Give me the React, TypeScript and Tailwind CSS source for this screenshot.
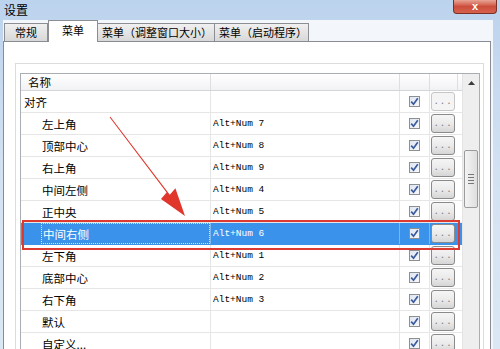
import React from "react";

type Row = { name: string; key: string; indent: boolean; selected?: boolean; dim?: boolean };

const rows: Row[] = [
  { name: "对齐", key: "", indent: false, dim: true },
  { name: "左上角", key: "Alt+Num 7", indent: true },
  { name: "顶部中心", key: "Alt+Num 8", indent: true },
  { name: "右上角", key: "Alt+Num 9", indent: true },
  { name: "中间左侧", key: "Alt+Num 4", indent: true },
  { name: "正中央", key: "Alt+Num 5", indent: true },
  { name: "中间右侧", key: "Alt+Num 6", indent: true, selected: true },
  { name: "左下角", key: "Alt+Num 1", indent: true },
  { name: "底部中心", key: "Alt+Num 2", indent: true },
  { name: "右下角", key: "Alt+Num 3", indent: true },
  { name: "默认", key: "", indent: true },
  { name: "自定义...", key: "", indent: true },
];

function CheckBox() {
  return (
    <div className="flex h-[11px] w-[11px] items-center justify-center border border-[#8e8f8f] bg-gradient-to-br from-[#dfe6f2] to-[#f6f8fb]">
      <svg width="9" height="9" viewBox="0 0 9 9">
        <path d="M1.2 4.6 L3.5 7.2 L7.8 1.2" fill="none" stroke="#3b5a9c" strokeWidth="1.7" />
      </svg>
    </div>
  );
}

function DotsButton({ dim }: { dim?: boolean }) {
  return (
    <div
      className={`flex h-[19px] w-[24px] items-end justify-center rounded-[3px] border pb-[3px] ${
        dim
          ? "border-[#c6c6c6] bg-[#f4f4f4]"
          : "border-[#8a8a8a] bg-gradient-to-b from-[#f5f5f5] via-[#ebebeb] to-[#d6d6d6]"
      }`}
    >
      <span className="font-['Liberation_Mono',monospace] text-[9px] leading-[9px] tracking-[1px] text-[#7a7a7a]">...</span>
    </div>
  );
}

export default function App() {
  const cjk = "font-['Noto_Sans_CJK_SC','Noto_Sans',sans-serif]";

  return (
    <div className={`relative h-[349px] w-[500px] overflow-hidden bg-gradient-to-b from-[#bcd3ed] via-[#d3e2f3] to-[#dbe7f4] ${cjk}`}>
      {/* title bar */}
      <div className="flex h-[20px] items-start justify-between">
        <span className="pl-[4px] pt-[3px] text-[12px] leading-[14px] text-black">设置</span>
        <div className="mr-[3px] flex h-[14px] w-[44px] items-center justify-center rounded-b-[4px] border border-t-0 border-[#7a3027] bg-gradient-to-b from-[#e7a495] via-[#cd4d3c] to-[#d5624d]">
          <span className="font-['Liberation_Sans',sans-serif] text-[11px] font-bold leading-[11px] text-white">x</span>
        </div>
      </div>

      {/* dialog body */}
      <div className="ml-[3px] flex h-[329px] w-[490px] flex-col bg-[#f3f6fa]">
        {/* tabs */}
        <div className="flex h-[23px] items-end pl-[1px] text-[11px] leading-[13px] text-black">
          <div className="flex h-[18px] w-[44px] items-center justify-center border border-b-0 border-[#8c8e94] bg-gradient-to-b from-[#f0f0f0] to-[#d8d8d8]">
            常规
          </div>
          <div className="relative z-10 -mb-px flex h-[22px] w-[50px] items-start justify-center border border-b-0 border-[#8c8e94] bg-white pt-[3px]">
            菜单
          </div>
          <div className="flex h-[18px] w-[117px] items-center border border-b-0 border-l-0 border-[#8c8e94] bg-gradient-to-b from-[#f0f0f0] to-[#d8d8d8] pl-[4px]">
            菜单（调整窗口大小）
          </div>
          <div className="flex h-[18px] w-[94px] items-center border border-b-0 border-l-0 border-[#8c8e94] bg-gradient-to-b from-[#f0f0f0] to-[#d8d8d8] pl-[4px]">
            菜单（启动程序）
          </div>
        </div>

        {/* tab panel */}
        <div className="w-[488px] flex-1 border border-[#898c95] bg-white pl-[11px] pt-[21px]">
          <div className="h-[300px] w-[469px] border border-[#dcdcdc] pl-[4px] pt-[9px]">
            <div className="flex h-[300px] w-[460px] border border-[#a9aeb5]">
              {/* table */}
              <div className="flex w-[441px] flex-col">
                <div className="flex h-[17px] shrink-0 border-b border-[#d5d5d5] bg-gradient-to-b from-white to-[#f1f2f4] text-[11.5px] leading-[16px]">
                  <div className="w-[190px] border-r border-[#dedede] pl-[7px]">名称</div>
                  <div className="w-[189px] border-r border-[#dedede]" />
                  <div className="w-[30px] border-r border-[#dedede]" />
                  <div className="w-[28px] border-r border-[#dedede]" />
                </div>
                {rows.map((r) => (
                  <div
                    key={r.name}
                    className={`flex h-[22px] shrink-0 border-b ${
                      r.selected ? "border-[#3a92ea] bg-[#3a92ea] text-white" : "border-[#e6e6e6] text-black"
                    }`}
                  >
                    <div
                      className={`flex w-[190px] items-center border-r text-[11.5px] leading-[14px] ${
                        r.selected ? "border-[#7fb6ee]" : "border-[#e6e6e6]"
                      } ${r.indent ? "pl-[20px]" : "pl-[2px]"}`}
                    >
                      {r.selected ? (
                        <div className="flex h-[21px] w-full items-center border border-dotted border-[#d6e8fb] pl-[1px]">
                          {r.name}
                        </div>
                      ) : (
                        <span className="pl-[1px]">{r.name}</span>
                      )}
                    </div>
                    <div
                      className={`flex w-[189px] items-center border-r pl-[2px] font-['Liberation_Mono',monospace] text-[9.5px] leading-[12px] ${
                        r.selected ? "border-[#7fb6ee]" : "border-[#e6e6e6]"
                      }`}
                    >
                      {r.key}
                    </div>
                    <div
                      className={`flex w-[30px] items-center justify-center border-r ${
                        r.selected ? "border-[#7fb6ee]" : "border-[#e6e6e6]"
                      }`}
                    >
                      <CheckBox />
                    </div>
                    <div className="flex w-[32px] items-center pl-[1px]">
                      <DotsButton dim={r.dim} />
                    </div>
                  </div>
                ))}
              </div>

              {/* scrollbar */}
              <div className="flex w-[17px] flex-col border-l border-[#e3e3e3] bg-[#eeeeee]">
                <div className="flex h-[17px] items-center justify-center">
                  <svg width="7" height="4" viewBox="0 0 7 4">
                    <path d="M0 4 L3.5 0 L7 4 Z" fill="#3c3c3c" />
                  </svg>
                </div>
                <div className="mx-[1px] mt-[59px] flex h-[58px] flex-col items-center justify-center gap-[2px] rounded-[2px] border border-[#9b9b9b] bg-gradient-to-r from-[#f4f4f4] to-[#dedede]">
                  <div className="h-px w-[6px] bg-[#777]" />
                  <div className="h-px w-[6px] bg-[#777]" />
                  <div className="h-px w-[6px] bg-[#777]" />
                  <div className="h-px w-[6px] bg-[#777]" />
                </div>
              </div>
            </div>
          </div>
        </div>
      </div>

      {/* annotation: red highlight box */}
      <div className="pointer-events-none absolute left-[22px] top-[220px] h-[30px] w-[438px] border-2 border-[#dc3a30]" />

      {/* annotation: red arrow */}
      <svg className="pointer-events-none absolute left-0 top-0" width="500" height="349" viewBox="0 0 500 349">
        <polygon
          points="109.6,117.3 110.4,116.7 169.8,194.8 175.4,188.2 185,216 161,199 166.6,192.4"
          fill="#e0362c"
        />
      </svg>
    </div>
  );
}
